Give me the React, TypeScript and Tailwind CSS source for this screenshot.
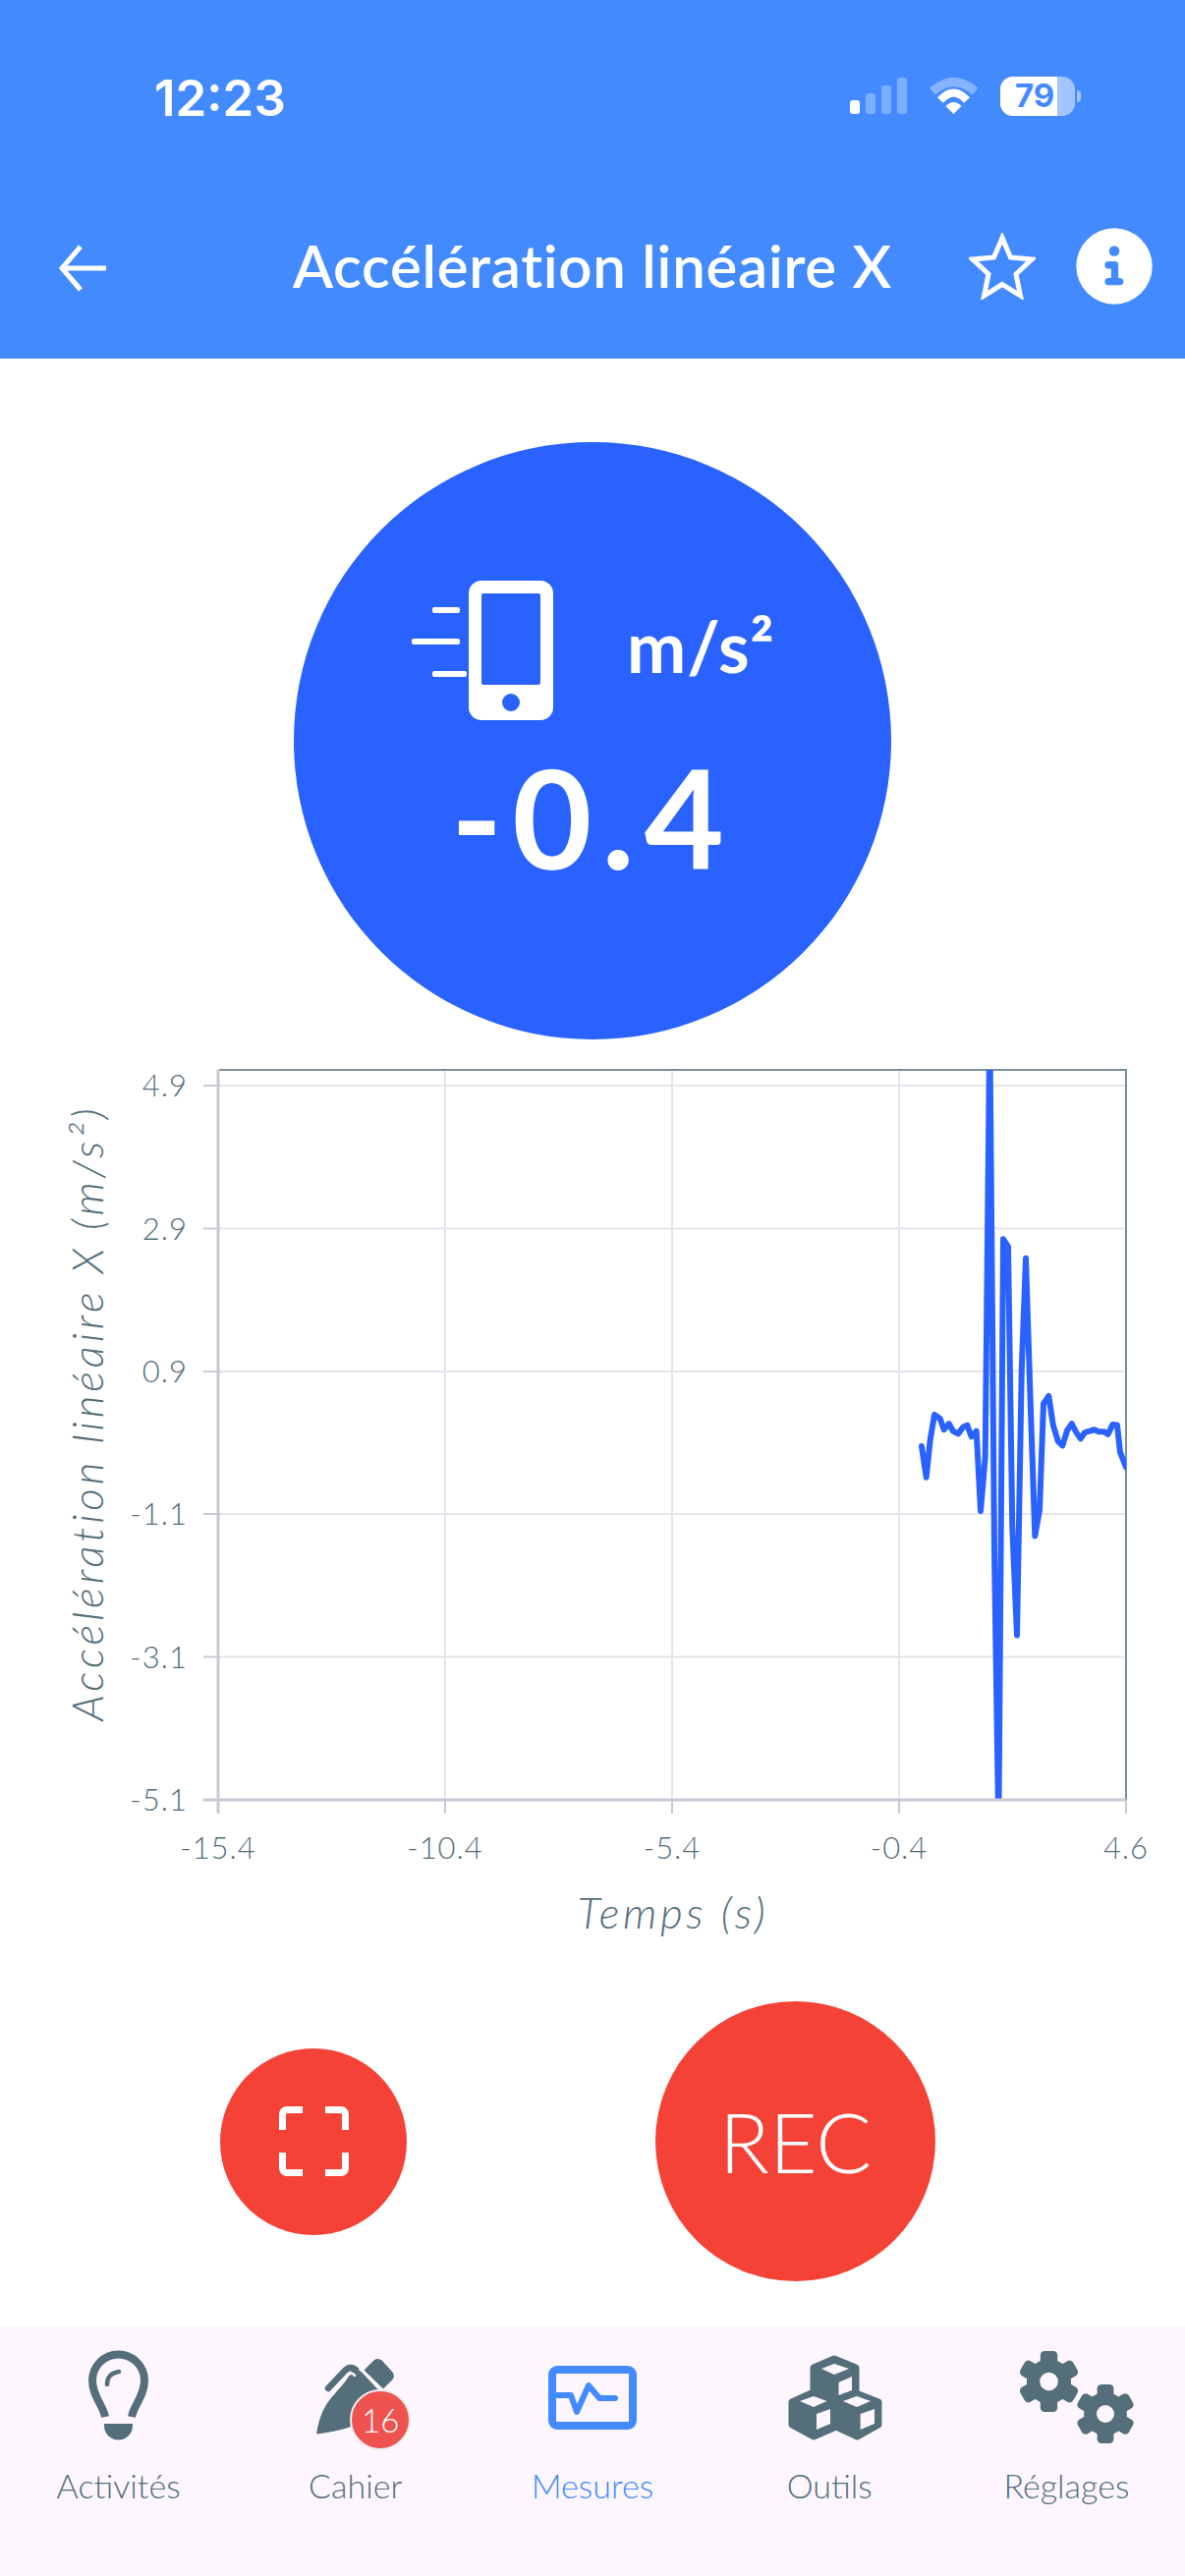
const FONT = "font-['Lato','Open_Sans',sans-serif]";

// trace read off the plot, in page pixels
const TRACE = [
  [264, 788], [278, 850], [290, 775], [303, 725], [320, 733], [332, 755], [347, 743], [360, 758], [376, 763],
  [390, 750], [403, 746], [416, 769], [431, 758], [444, 917], [458, 810], [472, -60], [486, 1000], [499, 1560],
  [513, 375], [528, 390], [541, 950], [555, 1165], [569, 640], [582, 413], [596, 700], [610, 967], [624, 915],
  [636, 703], [652, 688], [665, 745], [680, 778], [694, 787], [708, 757], [722, 743], [736, 760], [749, 773],
  [763, 760], [777, 758], [791, 755], [805, 759], [820, 759], [833, 764], [847, 745], [861, 746], [870, 800], [888, 830],
]
  .map(([x, y]) => `${(850 + x / 3).toFixed(1)},${(1070 + y / 1.96).toFixed(1)}`)
  .join(" ");

const Y_TICKS = [
  { label: "4.9", y: 1105 },
  { label: "2.9", y: 1250.5 },
  { label: "0.9", y: 1396 },
  { label: "-1.1", y: 1541 },
  { label: "-3.1", y: 1686.5 },
  { label: "-5.1", y: 1832 },
];
const X_TICKS = [
  { label: "-15.4", x: 222 },
  { label: "-10.4", x: 453 },
  { label: "-5.4", x: 684 },
  { label: "-0.4", x: 915 },
  { label: "4.6", x: 1146 },
];

function StatusBar() {
  return (
    <div className="mt-[77px] flex h-[41px] items-center pl-[157px] pr-[106px]">
      <span className="mt-[3px] font-['Inter',sans-serif] text-[51px] font-semibold leading-none text-white">12:23</span>
      <div className="ml-auto flex h-[37px] items-end gap-[6px]">
        <div className="h-[14px] w-[10px] rounded-[3px] bg-white" />
        <div className="h-[21px] w-[10px] rounded-[3px] bg-white/30" />
        <div className="h-[29px] w-[10px] rounded-[3px] bg-white/30" />
        <div className="h-[37px] w-[10px] rounded-[3px] bg-white/30" />
      </div>
      <svg className="ml-[23px] h-[41px] w-[52px]" viewBox="946 77 52 41" fill="none">
        <path d="M949 93 Q970.7 74 992.5 93" stroke="#fff" strokeOpacity="0.35" strokeWidth="9" />
        <path d="M957 102 Q970.5 87 984 102" stroke="#fff" strokeWidth="8" />
        <path d="M970.5 116 L962.5 108 Q970.5 100 978.5 108 Z" fill="#fff" />
      </svg>
      <div className="ml-[20px] flex items-center gap-[2px]">
        <div className="relative flex h-[40px] w-[76px] items-center overflow-hidden rounded-[13px] bg-white/50">
          <div className="h-full w-[58px] bg-white" />
          <span className="absolute left-[15px] font-['Inter',sans-serif] text-[33px] font-bold leading-none text-[#448aff]">79</span>
        </div>
        <div className="h-[12px] w-[4px] rounded-r-full bg-white/50" />
      </div>
    </div>
  );
}

function Header() {
  return (
    <header className="flex h-[365px] flex-col bg-[#448aff]">
      <StatusBar />
      <div className="mt-[114px] flex h-[78px] items-center">
        <svg className="ml-[60px] mt-[3px] h-[48px] w-[48px]" viewBox="0 0 48 48" fill="none" stroke="#fff" strokeWidth="5">
          <path d="M48 24 H3" />
          <path d="M22 2 L3 24 L22 46" />
        </svg>
        <h1 className={`mb-[3px] ml-[190px] w-[610px] whitespace-nowrap text-[60px] font-semibold leading-none tracking-[0.7px] text-white ${FONT}`}>
          Accélération linéaire X
        </h1>
        <svg className="ml-[78px] h-[68px] w-[68px]" viewBox="0 0 68 68" fill="none" stroke="#fff" strokeWidth="5">
          <path d="M34 5 L42.5 25 L64 27 L48 42 L52.5 64 L34 52.5 L15.5 64 L20 42 L4 27 L25.5 25 Z" />
        </svg>
        <svg className="ml-[41px] h-[78px] w-[78px]" viewBox="0 0 78 78" fill="none">
          <circle cx="39" cy="39" r="38.7" fill="#fff" />
          <circle cx="39" cy="23.5" r="5.3" fill="#448aff" />
          <path d="M33 37.8 H39.5 V54" stroke="#448aff" strokeWidth="7.4" strokeLinecap="round" strokeLinejoin="round" />
          <path d="M33 54.7 H44.7" stroke="#448aff" strokeWidth="7.2" strokeLinecap="round" />
        </svg>
      </div>
    </header>
  );
}

function Gauge() {
  return (
    <div className="ml-[299px] mt-[85px] flex h-[608px] w-[608px] flex-col rounded-full bg-[#2962ff]">
      <div className="flex pl-[120px] pt-[141px]">
        <svg className="h-[142px] w-[144px]" viewBox="419 591 144 142">
          <rect x="440" y="618" width="28" height="6" rx="2" fill="#fff" />
          <rect x="419" y="650" width="49" height="6" rx="2" fill="#fff" />
          <rect x="440" y="683" width="35" height="6" rx="2" fill="#fff" />
          <path
            fillRule="evenodd"
            fill="#fff"
            d="M490 591 H550 A13 13 0 0 1 563 604 V720 A13 13 0 0 1 550 733 H490 A13 13 0 0 1 477 720 V604 A13 13 0 0 1 490 591 Z M492 604 A2 2 0 0 0 490 606 V695 A2 2 0 0 0 492 697 H548 A2 2 0 0 0 550 695 V606 A2 2 0 0 0 548 604 Z M520 706 A9 9 0 1 0 520 724 A9 9 0 1 0 520 706 Z"
          />
        </svg>
        <span className={`ml-[75px] mt-[30px] h-[72px] text-[72px] font-bold leading-[72px] tracking-[1px] text-white ${FONT}`}>m/s²</span>
      </div>
      <div className={`mt-[23px] text-center text-[140px] font-bold leading-[150px] tracking-[10px] text-white ${FONT}`}>-0.4</div>
    </div>
  );
}

function Chart() {
  return (
    <svg className={`mt-[22px] block h-[900px] w-[1206px] ${FONT}`} viewBox="0 1080 1206 900">
      <defs>
        <clipPath id="plot">
          <rect x="222" y="1089" width="924" height="742" />
        </clipPath>
      </defs>
      {Y_TICKS.slice(0, 5).map((t) => (
        <line key={t.label} x1="222" x2="1146" y1={t.y} y2={t.y} stroke="#e8e3ec" strokeWidth="2" />
      ))}
      {X_TICKS.slice(1, 4).map((t) => (
        <line key={t.label} x1={t.x} x2={t.x} y1="1089" y2="1832" stroke="#e8e3ec" strokeWidth="2" />
      ))}
      <path d="M222 1089 H1146 V1832" fill="none" stroke="#78909c" strokeWidth="2" />
      <polyline points={TRACE} clipPath="url(#plot)" fill="none" stroke="#2962ff" strokeWidth="6" strokeLinejoin="round" strokeLinecap="round" />
      <path d="M207 1832 H1146" stroke="#cdc7d5" strokeWidth="3" />
      <path d="M222 1088 V1846" stroke="#cdc7d5" strokeWidth="3" />
      {Y_TICKS.map((t) => (
        <g key={t.label}>
          <line x1="207" x2="222" y1={t.y} y2={t.y} stroke="#cdc7d5" strokeWidth="2" />
          <text x="191" y={t.y + 11} textAnchor="end" fontSize="31" fontWeight="300" letterSpacing="1" fill="#546e7a">{t.label}</text>
        </g>
      ))}
      {X_TICKS.map((t) => (
        <g key={t.label}>
          <line x1={t.x} x2={t.x} y1="1832" y2="1846" stroke="#cdc7d5" strokeWidth="2" />
          <text x={t.x} y="1892" textAnchor="middle" fontSize="31" fontWeight="300" letterSpacing="1" fill="#546e7a">{t.label}</text>
        </g>
      ))}
      <text x="685" y="1963" textAnchor="middle" fontSize="44" fontStyle="italic" fontWeight="300" letterSpacing="3.6" fill="#546e7a">Temps (s)</text>
      <text transform="translate(105 1438) rotate(-90)" textAnchor="middle" fontSize="44" fontStyle="italic" fontWeight="300" letterSpacing="3.9" fill="#546e7a">
        Accélération linéaire X (m/s²)
      </text>
    </svg>
  );
}

function Controls() {
  return (
    <div className="mt-[57px] flex items-center pl-[224px]">
      <button className="flex h-[190px] w-[190px] items-center justify-center rounded-full bg-[#f44336]">
        <svg className="h-[71px] w-[71px]" viewBox="0 0 71 71" fill="none" stroke="#fff" strokeWidth="7">
          <path d="M24 3.5 H8 A4.5 4.5 0 0 0 3.5 8 V24" />
          <path d="M47 3.5 H63 A4.5 4.5 0 0 1 67.5 8 V24" />
          <path d="M24 67.5 H8 A4.5 4.5 0 0 1 3.5 63 V47" />
          <path d="M47 67.5 H63 A4.5 4.5 0 0 0 67.5 63 V47" />
        </svg>
      </button>
      <button className={`ml-[253px] flex h-[285px] w-[285px] items-center justify-center rounded-full bg-[#f44336] text-[84px] font-light leading-none text-white ${FONT}`}>
        REC
      </button>
    </div>
  );
}

const GREY = "#546e7a";
const NAV_BG = "#fdf6ff";

function Gear({ cx, cy, r }: { cx: number; cy: number; r: number }) {
  return (
    <g>
      {[0, 60, 120, 180, 240, 300].map((a) => (
        <rect
          key={a}
          x={cx - r * 0.28}
          y={cy - r}
          width={r * 0.56}
          height={r}
          rx={r * 0.14}
          fill={GREY}
          transform={`rotate(${a} ${cx} ${cy})`}
        />
      ))}
      <circle cx={cx} cy={cy} r={r * 0.73} fill={GREY} />
      <circle cx={cx} cy={cy} r={r * 0.3} fill={NAV_BG} />
    </g>
  );
}

function NavItem({ label, active, children }: { label: string; active?: boolean; children: React.ReactNode }) {
  return (
    <div className="relative flex flex-col items-center">
      {children}
      <span className={`mt-[15px] text-[34px] font-light leading-[40px] ${active ? "text-[#448aff]" : "text-[#546e7a]"} ${FONT}`}>{label}</span>
    </div>
  );
}

function BottomNav() {
  return (
    <nav className="mt-auto grid h-[255px] grid-cols-5 bg-[#fdf6ff] pt-[23px]">
      <NavItem label="Activités">
        <svg className="h-[105px] w-[241px]" viewBox="0 2390 241 105">
          <g transform="translate(90 2393)" fill="none" stroke={GREY}>
            <path d="M17 67 C15 55 4 46 4 30 A26.5 26.5 0 0 1 57 30 C57 46 46 55 44 67" strokeWidth="8" />
            <path d="M19 34 C19 27 23 22 31 21" strokeWidth="4.5" strokeLinecap="round" />
            <path d="M16 74 H45 V76 A14.5 14.5 0 0 1 16 76 Z" fill={GREY} stroke="none" />
          </g>
        </svg>
      </NavItem>
      <NavItem label="Cahier">
        <svg className="h-[105px] w-[241px]" viewBox="241 2390 241 105">
          <path d="M372.5 2412.5 L381.5 2403.5 Q385 2401.5 388 2404 L398 2415 Q400.5 2418 398.5 2421 L390 2429.5 Z" fill={GREY} stroke={GREY} strokeWidth="3" strokeLinejoin="round" />
          <path d="M322.7 2477 C325 2460 331 2448 339 2439 L352 2424 L360 2411 L367 2414 L386 2434 L372 2462 C360 2470 345 2474 322.7 2477 Z" fill={GREY} stroke={GREY} strokeWidth="1" strokeLinejoin="round" />
          <path d="M334 2431 L351 2413 Q356 2408 362 2412" fill="none" stroke={GREY} strokeWidth="6.5" strokeLinecap="round" />
          <path d="M336 2437 L355 2417 Q358.5 2414 361 2418" fill="none" stroke={NAV_BG} strokeWidth="2.5" strokeLinecap="round" />
        </svg>
        <span className={`absolute left-[115px] top-[42px] flex h-[62px] w-[62px] items-center justify-center rounded-full border-[2px] border-[#eeeeee] bg-[#ef5350] text-[33px] font-light leading-none text-white ${FONT}`}>
          16
        </span>
      </NavItem>
      <NavItem label="Mesures" active>
        <svg className="h-[105px] w-[241px]" viewBox="482 2390 241 105" fill="none" stroke="#448aff">
          <rect x="562" y="2412" width="82" height="57" rx="5" strokeWidth="8" />
          <path d="M566 2438 H581 L587 2455 L599 2428 L610 2441 H626" strokeWidth="6" strokeLinecap="round" strokeLinejoin="round" />
        </svg>
      </NavItem>
      <NavItem label="Outils">
        <svg className="h-[105px] w-[241px]" viewBox="724 2390 241 105">
          <path
            d="M849 2401 L871 2410 V2436 L894 2445 V2468 L872.5 2480 L851 2470 L828 2480 L806 2468 V2445 L828 2435 V2410 Z"
            fill={GREY}
            stroke={GREY}
            strokeWidth="7"
            strokeLinejoin="round"
          />
          <g fill={NAV_BG}>
            <path d="M849 2406 L864 2411 L849 2417 L836 2411 Z" />
            <path d="M867 2419 V2433 L853.5 2438 V2425 Z" />
            <path d="M828 2439 L841.5 2444 L828 2450 L814 2444 Z" />
            <path d="M845 2452 V2467 L831 2473 V2457 Z" />
            <path d="M872 2439 L886 2444 L872 2450 L858 2444 Z" />
            <path d="M890 2452 V2467 L875.6 2473 V2457 Z" />
          </g>
        </svg>
      </NavItem>
      <NavItem label="Réglages">
        <svg className="h-[105px] w-[241px]" viewBox="965 2390 241 105">
          <Gear cx={1067.5} cy={2424} r={31} />
          <Gear cx={1125} cy={2457} r={30} />
        </svg>
      </NavItem>
    </nav>
  );
}

export default function App() {
  return (
    <div className="flex h-[2622px] w-[1206px] flex-col overflow-hidden bg-white">
      <Header />
      <Gauge />
      <Chart />
      <Controls />
      <BottomNav />
    </div>
  );
}
